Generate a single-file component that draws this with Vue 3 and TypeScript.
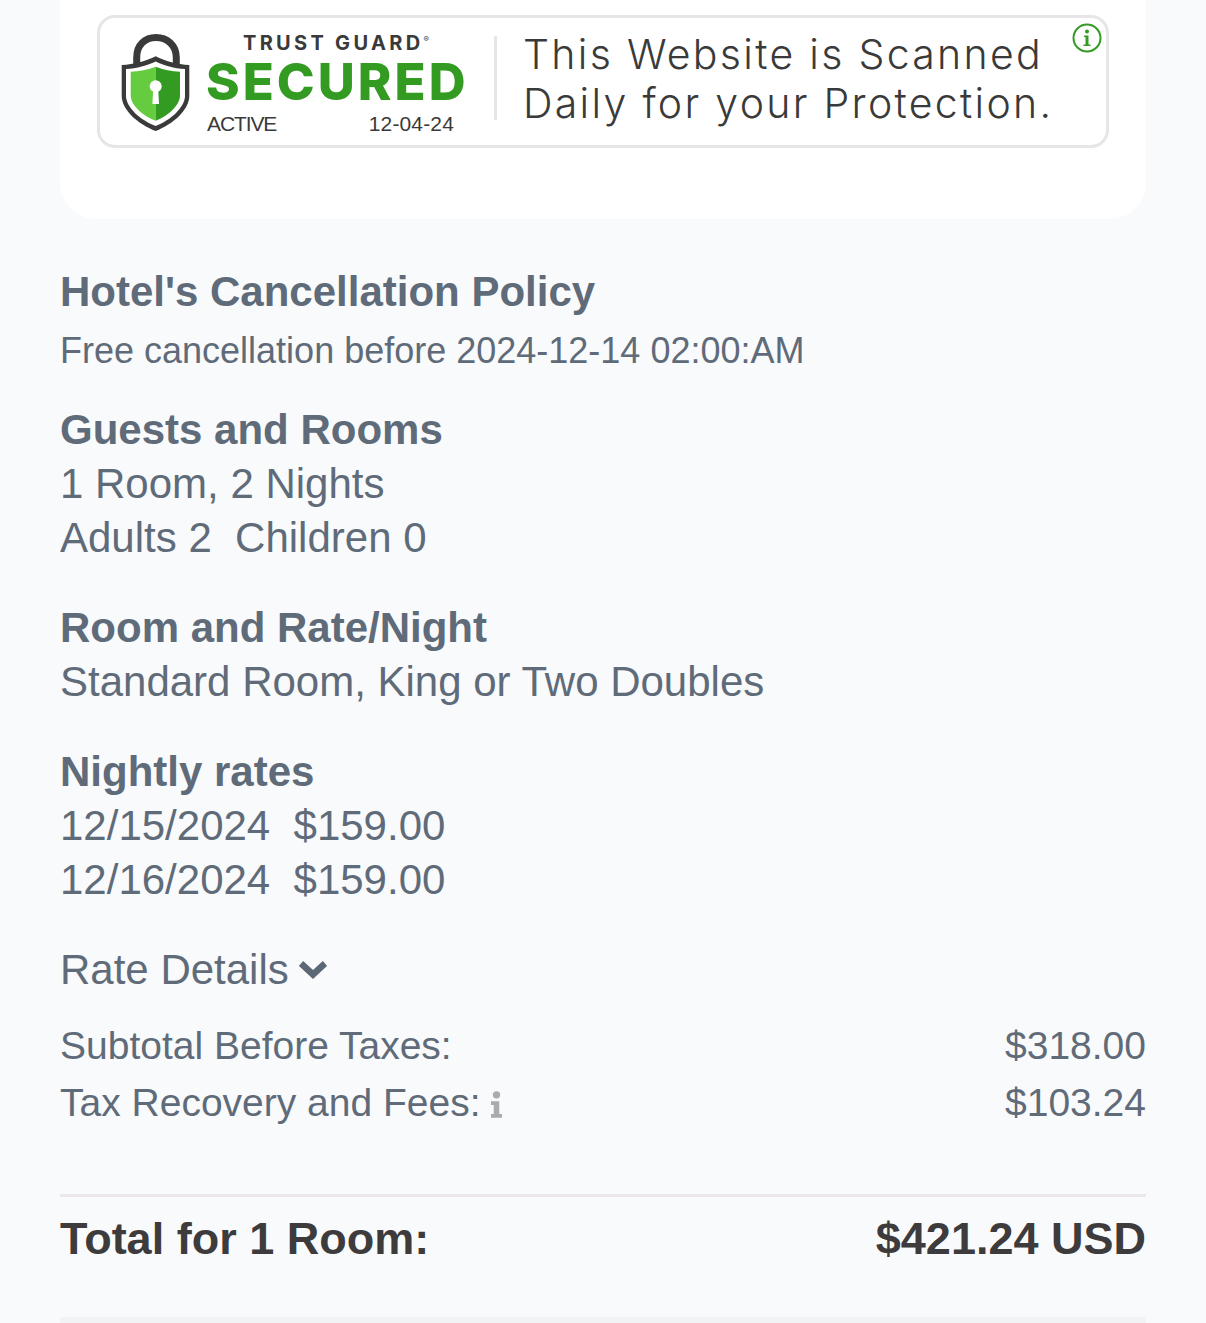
<script setup lang="ts">
interface Row { label: string; value: string; info?: boolean }
const rows: Row[] = [
  { label: 'Subtotal Before Taxes:', value: '$318.00' },
  { label: 'Tax Recovery and Fees:', value: '$103.24', info: true },
]
</script>

<template>
  <div class="page">
    <section class="card">
      <div class="seal">
        <svg class="lock" viewBox="0 0 69 98" width="69" height="98">
          <path d="M15.700 32V23.500C15.700 11 24 3.500 35 3.500S55.300 11 55.300 23.500V32" fill="none" stroke="#3a3a3a" stroke-width="7" />
          <path d="M34.700 22.300C44 27 56 30.500 68.300 31V61.700C68.300 76 52 90 34.700 97C17 90 .7 76 .7 61.700V31C13 30.500 25 27 34.700 22.300Z" fill="#3a3a3a" />
          <path d="M34.700 27.500C43 31.500 53 34.500 64 35V61.700C64 73 50 86 34.700 92C19 86 5 73 5 61.700V35C16 34.500 26 31.500 34.700 27.500Z" fill="#fff" />
          <path d="M34.700 32.700V86.700C22 82 9.700 71 9.700 61.700V37.700C18 37.500 27 35.500 34.700 32.700Z" fill="#66cc3f" />
          <path d="M34.700 32.700V86.700C47 82 59 71 59 61.700V37.700C51 37.500 42 35.500 34.700 32.700Z" fill="#339a22" />
          <circle cx="34.700" cy="52.300" r="6" fill="#fff" />
          <path d="M32.200 55H37.200L38 70H31.400Z" fill="#fff" />
        </svg>
        <div class="brand">
          <div class="guard">TRUST GUARD<sup>®</sup></div>
          <div class="secured">SECURED</div>
          <div class="status"><span class="active">ACTIVE</span><span class="date">12-04-24</span></div>
        </div>
        <div class="claim">
          <div>This Website is Scanned</div>
          <div>Daily for your Protection.</div>
        </div>
        <svg class="seal-info" viewBox="0 0 30 30" width="30" height="30">
          <circle cx="15" cy="15" r="13.500" fill="#fff" stroke="#339a22" stroke-width="2" />
          <circle cx="15" cy="8.500" r="2" fill="#339a22" />
          <path d="M12 12.500h4.500v9H18.500v1.500h-7v-1.500h2v-7.500h-1.500z" fill="#339a22" />
        </svg>
      </div>
    </section>

    <section class="details">
      <h2 class="policy-title">Hotel's Cancellation Policy</h2>
      <p class="policy-text">Free cancellation before 2024-12-14 02:00:AM</p>

      <div class="block guests">
        <h3>Guests and Rooms</h3>
        <p>1 Room, 2 Nights</p>
        <p>Adults 2&nbsp; Children 0</p>
      </div>
      <div class="block">
        <h3>Room and Rate/Night</h3>
        <p>Standard Room, King or Two Doubles</p>
      </div>
      <div class="block">
        <h3>Nightly rates</h3>
        <p>12/15/2024&nbsp; $159.00</p>
        <p>12/16/2024&nbsp; $159.00</p>
      </div>

      <div class="rate-details">
        <span>Rate Details</span>
        <svg viewBox="0 0 28 20" width="28" height="20">
          <path d="M2 3.500L14 14.500L26 3.500" fill="none" stroke="#5d6876" stroke-width="6.500" />
        </svg>
      </div>

      <div class="charges">
        <div v-for="row in rows" :key="row.label" class="charge">
          <span class="charge-label">
            {{ row.label }}
            <svg v-if="row.info" class="mini-info" viewBox="0 0 12 30" width="11" height="30">
              <circle cx="6" cy="5" r="4" fill="#ababab" />
              <path d="M0 12h9v14h3v4H0v-4h3v-10H0z" fill="#ababab" />
            </svg>
          </span>
          <span>{{ row.value }}</span>
        </div>
      </div>

      <div class="total">
        <span>Total for 1 Room:</span>
        <span>$421.24 USD</span>
      </div>
      <div class="bottom-rule"></div>
    </section>
  </div>
</template>

<style scoped>
.page {
  width: 1206px;
  height: 1323px;
  overflow: hidden;
  background: #f9fafc;
  font-family: "Liberation Sans", Arial, sans-serif;
  color: #606b79;
}
.card {
  margin: 0 60px;
  height: 219px;
  padding: 15px 37px 0;
  box-sizing: border-box;
  background: #fff;
  border-radius: 0 0 36px 36px;
}
.seal {
  position: relative;
  box-sizing: border-box;
  height: 133px;
  border: 3px solid #e6e6e6;
  border-radius: 18px;
  display: flex;
  align-items: center;
  padding-left: 21px;
}
.lock { flex: none; margin-top: 3px; }
.brand {
  width: 304px;
  box-sizing: border-box;
  padding-left: 16px;
  color: #3a3a3a;
  height: 127px;
  display: flex;
  flex-direction: column;
  align-items: flex-start;
}
.guard {
  font-family: Inter, sans-serif;
  font-weight: 700;
  font-size: 20px;
  line-height: 20px;
  letter-spacing: 3.3px;
  margin: 15px 0 0 37px;
  white-space: nowrap;
}
.guard sup { font-size: 8px; font-weight: 400; vertical-align: 8px; line-height: 0; letter-spacing: 0; }
.secured {
  font-family: Inter, sans-serif;
  font-weight: 800;
  font-size: 51px;
  line-height: 40px;
  margin-top: 9px;
  color: #339a22;
  letter-spacing: 3px;
  white-space: nowrap;
}
.status {
  display: flex;
  justify-content: space-between;
  width: 247px;
  margin-left: 1px;
  font-size: 21px;
  line-height: 20px;
  margin-top: 12px;
}
.active { letter-spacing: -1.1px; }
.date { letter-spacing: 0.15px; }
.claim {
  box-sizing: border-box;
  height: 84px;
  border-left: 3px solid #e6e6e6;
  padding: 3px 0 0 26px;
  margin-bottom: 8px;
  color: #3a3a3a;
  font-family: Inter, sans-serif;
  font-weight: 300;
  font-size: 41px;
  line-height: 49px;
  letter-spacing: 2.3px;
  white-space: nowrap;
  display: flex;
  flex-direction: column;
  justify-content: center;
}
.seal-info { position: absolute; top: 5px; right: 4px; }
.details { margin: 0 60px; }
.policy-title {
  margin: 0;
  padding-top: 46px;
  font-size: 42px;
  line-height: 54px;
  font-weight: 700;
}
.policy-text {
  margin: 5px 0 0;
  font-size: 36px;
  line-height: 54px;
}
.block { margin-top: 36px; }
.block.guests { margin-top: 25px; }
.block h3 {
  margin: 0;
  font-size: 42px;
  line-height: 54px;
  font-weight: 700;
}
.block p {
  margin: 0;
  font-size: 42px;
  line-height: 54px;
}
.rate-details {
  margin-top: 36px;
  display: flex;
  align-items: center;
  gap: 10px;
  font-size: 42px;
  line-height: 54px;
}
.charges { margin-top: 20px; }
.charge {
  display: flex;
  justify-content: space-between;
  font-size: 39px;
  line-height: 57px;
}
.charge-label { display: flex; align-items: center; gap: 10px; }
.mini-info { margin-top: 2px; }
.total {
  margin-top: 63px;
  border-top: 3px solid #ece8ea;
  padding-top: 12px;
  display: flex;
  justify-content: space-between;
  font-size: 45px;
  line-height: 60px;
  font-weight: 700;
  color: #3e3b3d;
}
.bottom-rule {
  margin-top: 48px;
  height: 6px;
  background: #f2f3f5;
}
</style>
